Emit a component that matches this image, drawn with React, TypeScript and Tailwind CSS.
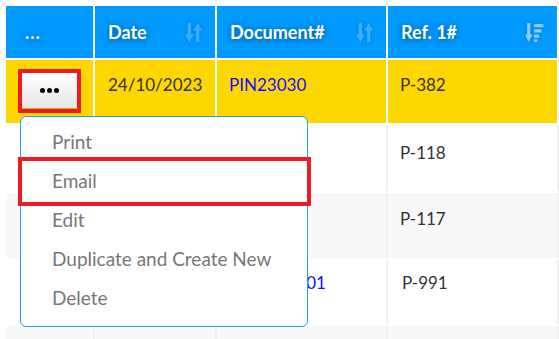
import React from 'react';

const font = { fontFamily: 'Lato, "Noto Sans", sans-serif' };

function SortIcon(): React.ReactElement {
  return (
    <svg width="17" height="21" viewBox="0 0 16 20" className="drop-shadow-[0_0_2px_rgba(0,60,140,0.3)]">
      <g fill="#3fadff">
        <rect x="2.5" y="1" width="3" height="12" />
        <polygon points="0,12 8,12 4,19" />
        <rect x="10.5" y="7" width="3" height="12" />
        <polygon points="8,8 16,8 12,1" />
      </g>
    </svg>
  );
}

function SortDownIcon(): React.ReactElement {
  return (
    <svg width="19" height="21" viewBox="0 0 18 20" className="drop-shadow-[0_0_2px_rgba(0,60,140,0.3)]">
      <g fill="#92cdff">
        <rect x="2" y="1" width="3" height="12" />
        <polygon points="0,12 7,12 3.5,19" />
        <rect x="8.5" y="2" width="9" height="3" />
        <rect x="8.5" y="7" width="7" height="3" />
        <rect x="8.5" y="12" width="5" height="3" />
        <rect x="8.5" y="16.5" width="3" height="2.5" />
      </g>
    </svg>
  );
}

const cols = 'grid grid-cols-[87px_120px_169px_169px] gap-x-[2px]';

const menuItems = ['Print', 'Email', 'Edit', 'Duplicate and Create New', 'Delete'];

function HeaderCell({ label, icon }: { label: string; icon?: React.ReactNode }): React.ReactElement {
  return (
    <div className="bg-[#0099ff] h-[52px] flex items-center justify-between pl-[13px] pr-[13px]">
      <span className="text-white font-bold text-[18px] [text-shadow:0_1px_6px_rgba(0,0,0,0.5)]">{label}</span>
      {icon}
    </div>
  );
}

function BodyRow({ cells, bg, h, pt }: { cells: React.ReactNode[]; bg: string; h: string; pt: string }): React.ReactElement {
  return (
    <div className={`${cols} bg-[#f0f0f0] mt-[2px]`}>
      {cells.map((c, i) => (
        <div key={i} className={`${bg} ${h} ${pt} pl-[12px] text-[17px] text-[#333]`}>
          {c}
        </div>
      ))}
    </div>
  );
}

export default function App(): React.ReactElement {
  return (
    <div className="relative w-[559px] h-[339px] overflow-hidden bg-white" style={font}>
      <div className="pl-[6px] pt-[6px]">
        <div className={`${cols} bg-white`}>
          <div className="bg-[#0099ff] h-[52px] flex items-center pl-[19px]">
            <span className="text-white font-bold text-[18px] tracking-[1px] [text-shadow:0_1px_6px_rgba(0,0,0,0.5)]">...</span>
          </div>
          <HeaderCell label="Date" icon={<SortIcon />} />
          <HeaderCell label="Document#" icon={<SortIcon />} />
          <HeaderCell label="Ref. 1#" icon={<SortDownIcon />} />
        </div>

        <div className={`${cols} bg-white mt-[2px]`}>
          <div className="bg-[#ffd700] h-[63px] flex items-start pt-[12px] pl-[16px]">
            <button className="w-[55px] h-[36px] flex items-center justify-center gap-[2px] bg-gradient-to-b from-white to-[#e6e6e6] shadow-[0_1px_3px_rgba(0,0,0,0.25)]">
              <span className="w-[5px] h-[5px] rounded-full bg-black" />
              <span className="w-[5px] h-[5px] rounded-full bg-black" />
              <span className="w-[5px] h-[5px] rounded-full bg-black" />
            </button>
          </div>
          <div className="bg-[#ffd700] h-[63px] pt-[12px] pl-[13px] text-[17px] text-[#333]">24/10/2023</div>
          <div className="bg-[#ffd700] h-[63px] pt-[12px] pl-[12px] text-[17px] text-[#1010ff]">PIN23030</div>
          <div className="bg-[#ffd700] h-[63px] pt-[12px] pl-[12px] text-[17px] text-[#333]">P-382</div>
        </div>

        <BodyRow bg="bg-white" h="h-[66px]" pt="pt-[15px]" cells={['', '', '', 'P-118']} />
        <BodyRow bg="bg-[#f8f8f9]" h="h-[65px]" pt="pt-[13px]" cells={['', '', '', 'P-117']} />
        <BodyRow
          bg="bg-white"
          h="h-[64px]"
          pt="pt-[10px]"
          cells={['', '', <span className="text-[#1010ff]">PIN2300001</span>, <span className="pl-[2px]">P-991</span>]}
        />
        <BodyRow bg="bg-[#f8f8f9]" h="h-[40px]" pt="pt-[12px]" cells={['', '', '', '']} />
      </div>

      {/* highlight around the action button */}
      <div className="absolute left-[18px] top-[69px] w-[63px] h-[44px] border-[4px] border-[#ed1c24]" />

      {/* action menu */}
      <div className="absolute left-[20px] top-[116px] w-[288px] h-[211px] bg-white border border-[#1e9bff] rounded-[6px] pt-[6px]">
        {menuItems.map((m) => (
          <div key={m} className="h-[39px] flex items-center pl-[31px] text-[19px] text-[#777]">
            {m}
          </div>
        ))}
      </div>

      {/* highlight around Email */}
      <div className="absolute left-[18px] top-[157px] w-[293px] h-[49px] border-[4px] border-[#ed1c24]" />
    </div>
  );
}
